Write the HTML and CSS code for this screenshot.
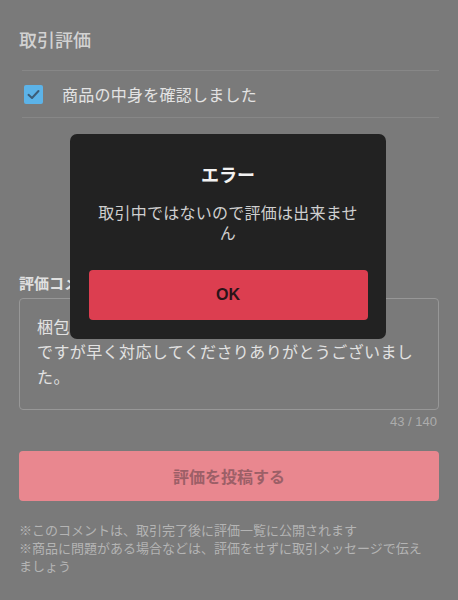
FILE: index.html
```html
<!DOCTYPE html>
<html lang="ja">
<head>
<meta charset="utf-8">
<link rel="stylesheet" href="styles.css">
</head>
<body>
<div class="page">
  <h1 class="title">取引評価</h1>
  <div class="divider"></div>
  <label class="check-row">
    <span class="checkbox">
      <svg viewBox="0 0 19 19" width="19" height="19"><path d="M4.5 9.8 L8 13 L14.5 6" fill="none" stroke="#3d5d78" stroke-width="2" stroke-linecap="round" stroke-linejoin="round"/></svg>
    </span>
    <span class="check-label">商品の中身を確認しました</span>
  </label>
  <div class="divider"></div>

  <div class="comment-label">評価コメント</div>
  <div class="textarea">梱包も丁寧で綺麗な状態で届きました。<br>ですが早く対応してくださりありがとうございました。</div>
  <div class="counter">43 / 140</div>

  <button class="submit">評価を投稿する</button>

  <div class="notes">
    <p>※このコメントは、取引完了後に評価一覧に公開されます</p>
    <p>※商品に問題がある場合などは、評価をせずに取引メッセージで伝えましょう</p>
  </div>
</div>

<div class="modal">
  <div class="modal-title">エラー</div>
  <div class="modal-msg">取引中ではないので評価は出来ません</div>
  <button class="ok">OK</button>
</div>
</body>
</html>
```

FILE: styles.css
```css
html, body {
  margin: 0;
  padding: 0;
  background: #7a7a7a;
  font-family: "Noto Sans CJK JP", "Noto Sans", sans-serif;
}
.page {
  padding: 0 19px;
  width: 420px;
}
.title {
  margin: 0;
  padding-top: 26px;
  font-size: 18px;
  line-height: 26px;
  font-weight: 500;
  color: #d2d2d2;
  height: 44px;
}
.divider {
  height: 1px;
  background: #878787;
  margin-left: 3px;
}
.check-row {
  display: flex;
  align-items: center;
  height: 46px;
  padding-left: 5px;
  gap: 19px;
}
.checkbox {
  width: 19px;
  height: 19px;
  background: #5cb3e8;
  border-radius: 2px;
  display: flex;
}
.check-label {
  font-size: 16px;
  letter-spacing: 0.25px;
  color: #e3e3e3;
}
.comment-label {
  margin-top: 155px;
  font-size: 15px;
  line-height: 20px;
  font-weight: 700;
  color: #e0e0e0;
}
.textarea {
  margin-top: 5px;
  height: 110px;
  border: 1px solid #979797;
  border-radius: 4px;
  padding: 15px 17px 0 17px;
  box-sizing: border-box;
  height: 112px;
  font-size: 16px;
  letter-spacing: 0.4px;
  line-height: 25px;
  color: #e2e2e2;
}
.counter {
  margin-top: 3px;
  text-align: right;
  font-family: "Liberation Sans", sans-serif;
  font-size: 13px;
  line-height: 18px;
  color: #acacac;
  padding-right: 2px;
}
.submit {
  display: block;
  margin-top: 20px;
  width: 100%;
  height: 50px;
  border: none;
  border-radius: 4px;
  background: #e9878f;
  color: #9c5f67;
  font-family: inherit;
  font-size: 16px;
  font-weight: 700;
}
.notes {
  margin-top: 20px;
  padding-right: 8px;
  font-size: 13px;
  line-height: 18px;
  color: #b4b4b4;
}
.notes p {
  margin: 0;
}
.modal {
  position: fixed;
  top: 134px;
  left: 70px;
  width: 316px;
  height: 205px;
  box-sizing: border-box;
  background: #222222;
  border-radius: 7px;
  padding: 28px 19px 19px;
  display: flex;
  flex-direction: column;
  align-items: center;
}
.modal-title {
  font-size: 18px;
  line-height: 24px;
  font-weight: 700;
  color: #f2f2f2;
}
.modal-msg {
  margin-top: 16px;
  width: 268px;
  text-align: center;
  font-size: 16px;
  line-height: 20px;
  letter-spacing: 0.25px;
  color: #cfcfcf;
}
.ok {
  margin-top: auto;
  width: 279px;
  height: 50px;
  border: none;
  border-radius: 4px;
  background: #dc3e50;
  color: #2b1418;
  font-family: "Liberation Sans", sans-serif;
  font-size: 16px;
  font-weight: 700;
}
```
